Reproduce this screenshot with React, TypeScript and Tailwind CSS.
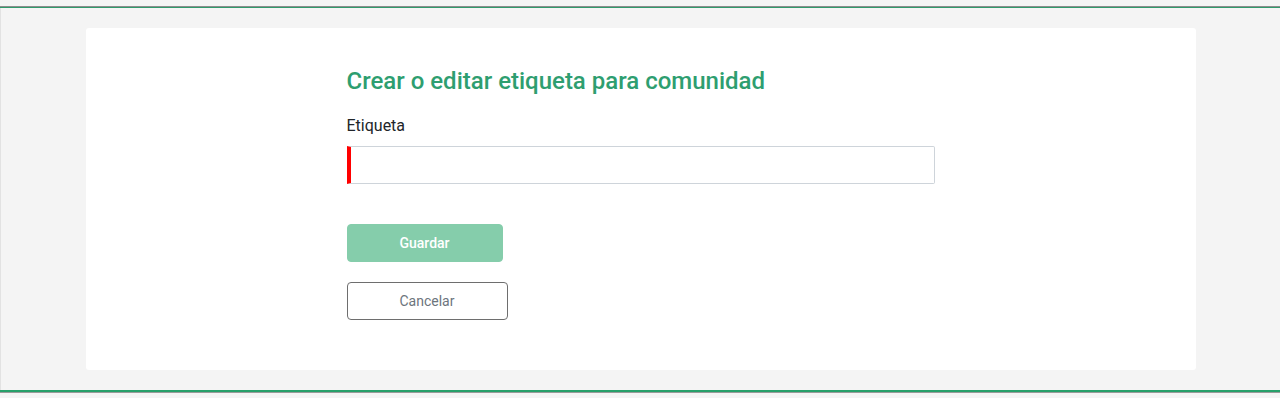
export default function App() {
    return (
        <div className="min-h-screen bg-[#f4f4f4] font-['Roboto',sans-serif]">
            {/* Header lines */}
            <div className="h-[6px]" />
            <div className="h-px bg-[#8c8c8c]" />
            <div className="h-px bg-[#2f9a6b]" />

            <main className="border-l border-[#e2e2e2] pt-[20px] pb-[20px]">
                <div className="mx-auto w-[1110px] rounded-[3px] bg-white pl-[261px] pt-[39px] pb-[50px]">
                    <h1 className="text-[24px] leading-[29px] font-medium text-[#2e9e70]">
                        Crear o editar etiqueta para comunidad
                    </h1>

                    <label className="mt-[18px] block text-[16px] leading-[24px] text-[#212529]">
                        Etiqueta
                    </label>
                    <input
                        type="text"
                        className="mt-[8px] block h-[38px] w-[588px] rounded-r-[2px] border border-l-4 border-[#ced4da] border-l-[#ff0000] bg-white px-3 text-[16px] outline-none"
                    />

                    <div className="mt-[40px]">
                        <button className="h-[38px] w-[156px] rounded-[4px] border border-[#85cdab] bg-[#85cdab] text-[14px] font-medium text-white">
                            Guardar
                        </button>
                    </div>
                    <div className="mt-[20px]">
                        <button className="h-[38px] w-[161px] rounded-[4px] border border-[#6e6e6e] bg-white text-[14px] text-[#6c757d]">
                            Cancelar
                        </button>
                    </div>
                </div>
            </main>

            {/* Footer lines */}
            <div className="h-[2px] bg-[#27a06a]" />
            <div className="h-px bg-[#9a9a9a]" />
        </div>
    );
}
